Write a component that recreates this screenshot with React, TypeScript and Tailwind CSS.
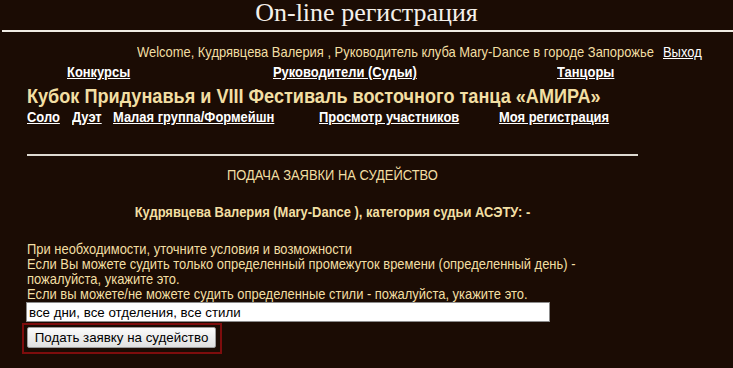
import React from "react";

const sans = { fontFamily: '"Liberation Sans", Arial, sans-serif' };

function N({ children, className = "" }: { children: React.ReactNode; className?: string }) {
  return <span className={"inline-block whitespace-nowrap origin-left scale-x-[0.862] " + className}>{children}</span>;
}

function C({ children, className = "" }: { children: React.ReactNode; className?: string }) {
  return <span className={"inline-block whitespace-nowrap origin-center scale-x-[0.862] " + className}>{children}</span>;
}

function L({ children }: { children: React.ReactNode }) {
  return (
    <a className="text-white">
      <N className="underline">{children}</N>
    </a>
  );
}

export default function App() {
  return (
    <div className="w-[733px] h-[368px] bg-[#1b0c04] text-[#f2dfa3] overflow-hidden" style={sans}>
      <div className="h-[30px] flex justify-center items-start">
        <span className="text-[26px] leading-[26px] text-[#f4f0ea]" style={{ fontFamily: '"Liberation Serif", serif' }}>On-line регистрация</span>
      </div>
      <div className="h-[2px] bg-[#f0ece4] ml-[2px]" />
      <div className="flex pl-[137px] pt-[12px] text-[15px] leading-[16px]">
        <div className="w-[526px]"><N>Welcome, Кудрявцева Валерия , Руководитель клуба Mary-Dance в городе Запорожье</N></div>
        <a className="text-white"><N className="underline">Выход</N></a>
      </div>
      <div className="flex text-[15px] leading-[16px] font-bold pt-[4px] pl-[67px]">
        <div className="w-[206px]"><L>Конкурсы</L></div>
        <div className="w-[284px]"><L>Руководители (Судьи)</L></div>
        <div><L>Танцоры</L></div>
      </div>
      <div className="pl-[27px] pt-[5px] text-[21px] leading-[22px] font-bold">
        <N>Кубок Придунавья и VIII Фестиваль восточного танца «АМИРА»</N>
      </div>
      <div className="flex text-[15px] leading-[16px] font-bold pt-[2px] pl-[27px]">
        <div className="w-[45px]"><L>Соло</L></div>
        <div className="w-[41px]"><L>Дуэт</L></div>
        <div className="w-[206px]"><L>Малая группа/Формейшн</L></div>
        <div className="w-[180px]"><L>Просмотр участников</L></div>
        <div><L>Моя регистрация</L></div>
      </div>
      <div className="w-[611px] ml-[27px] mt-[29px]">
        <div className="h-[2px] bg-[#dedad2]" />
        <div className="text-center text-[15px] leading-[16px] pt-[11px]">
          <C>ПОДАЧА ЗАЯВКИ НА СУДЕЙСТВО</C>
        </div>
        <div className="text-center text-[15px] leading-[16px] font-bold pt-[21px]">
          <C>Кудрявцева Валерия (Mary-Dance ), категория судьи АСЭТУ: -</C>
        </div>
      </div>
      <div className="pl-[27px] pt-[21px] text-[15px] leading-[15px] flex flex-col items-start">
        <N>При необходимости, уточните условия и возможности</N>
        <N>Если Вы можете судить только определенный промежуток времени (определенный день) -</N>
        <N>пожалуйста, укажите это.</N>
        <N>Если вы можете/не можете судить определенные стили - пожалуйста, укажите это.</N>
      </div>
      <div className="pl-[26px] pt-[1px] flex">
        <input
          readOnly
          value="все дни, все отделения, все стили"
          className="w-[524px] h-[20px] bg-white border border-[#8c8c8c] px-[2px] text-[13.33px] text-black outline-none"
        />
      </div>
      <div className="pl-[22px] pt-[1px] flex">
        <div className="flex border-2 border-[#7e0d0d] pl-[3px] pr-[4px] pt-[2px] pb-[4px]">
          <button className="h-[21px] w-[189px] bg-gradient-to-b from-[#fbfbfb] to-[#e0e0e0] border border-[#9c9c9c] rounded-[2px] text-[13.33px] text-black leading-[19px]">
            Подать заявку на судейство
          </button>
        </div>
      </div>
    </div>
  );
}
